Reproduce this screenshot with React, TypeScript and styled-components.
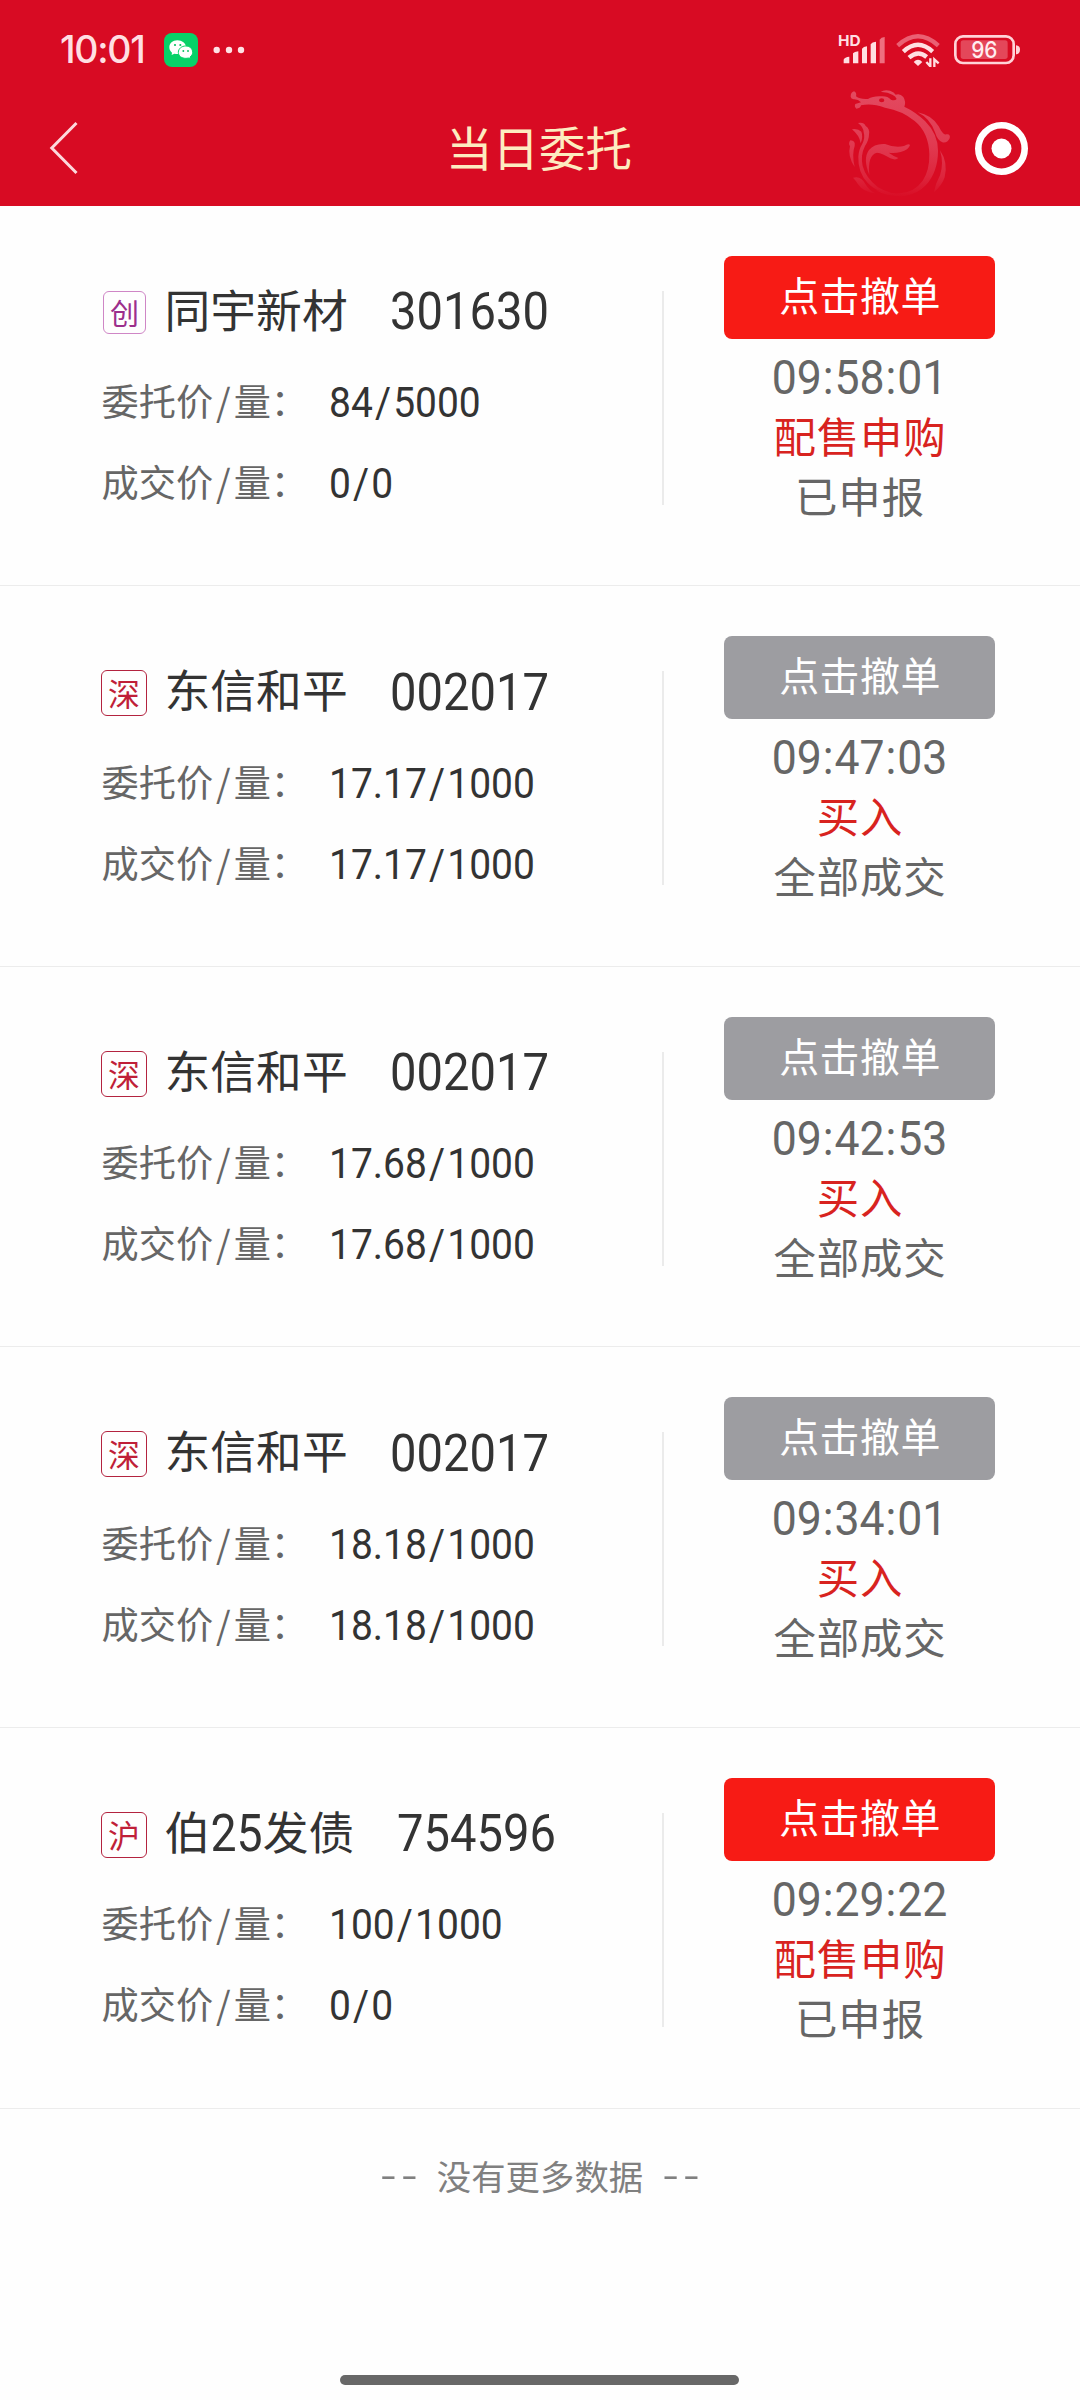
import React from "react";
import styled, { createGlobalStyle } from "styled-components";

const cjk = `"Noto Sans CJK SC", sans-serif`;
const latin = `Roboto, "Noto Sans CJK SC", sans-serif`;

const GlobalStyle = createGlobalStyle`
  * { box-sizing: border-box; }
  body { margin: 0; background: #fefefe; font-family: ${cjk}; }
`;

const Screen = styled.div`
  width: 1080px;
  height: 2400px;
  display: flex;
  flex-direction: column;
  overflow: hidden;
  background: #fefefe;
`;

const Header = styled.header`
  flex: none;
  height: 205.6px;
  background: #d80b23;
`;

const StatusBar = styled.div`
  height: 90px;
  padding: 10px 59px 0 60px;
  display: flex;
  align-items: center;
  justify-content: space-between;
`;

const StatusGroup = styled.div<{ $gap?: number }>`
  display: flex;
  align-items: center;
  gap: ${(p) => p.$gap ?? 0}px;
`;

const Clock = styled.span`
  width: 104px;
  font: 500 37.5px/40px Inter, sans-serif;
  letter-spacing: -1.3px;
  color: #ffdfe2;
`;

const NavBar = styled.div`
  position: relative;
  height: 115.6px;
  padding: 1px 52px 0 49px;
  display: flex;
  align-items: center;
  justify-content: space-between;
`;

const Title = styled.h1`
  margin: 0;
  font: 400 46.5px/60px ${cjk};
  color: #fdecc0;
  transform: translate(0.5px, -2px);
`;

const DragonMark = styled.svg`
  position: absolute;
  left: 845px;
  top: -4px;
  width: 110px;
  height: 116px;
`;

const Icon = styled.svg`
  display: block;
  flex: none;
`;

const MoreDots = styled(Icon)`
  margin-left: 14px;
`;

const Row = styled.article`
  flex: none;
  height: 380.6px;
  display: flex;
  border-bottom: 1.5px solid #ececec;
`;

const Details = styled.div`
  width: 664px;
  padding: 59px 0 0 101px;
`;

const Divider = styled.div`
  flex: none;
  width: 2px;
  height: 214px;
  margin: 85px 0 0 -2px;
  background: #ebebeb;
`;

const NameLine = styled.div`
  height: 92px;
  margin-bottom: 4px;
  display: flex;
  align-items: center;
`;

const Badge = styled.span<{ $purple?: boolean }>`
  flex: none;
  width: ${(p) => (p.$purple ? 43 : 46)}px;
  height: ${(p) => (p.$purple ? 43 : 46)}px;
  margin: ${(p) => (p.$purple ? "4px 19px 0 2px" : "4px 18px 0 0")};
  padding-bottom: 2px;
  border: 1px solid ${(p) => (p.$purple ? "#cf86c6" : "#b3233f")};
  border-radius: 6px;
  display: flex;
  align-items: center;
  justify-content: center;
  font-size: ${(p) => (p.$purple ? 29 : 32)}px;
  line-height: 40px;
  color: ${(p) => (p.$purple ? "#9c2f8c" : "#c01f38")};
`;

const Name = styled.span`
  margin-right: 42px;
  font-size: 45.8px;
  line-height: 60px;
  color: #333;
  white-space: nowrap;
  transform: translate(-0.5px, -3px);
`;

const Digits = styled.span<{ $size: number; $color?: string; $center?: boolean }>`
  display: inline-block;
  font-family: ${latin};
  font-size: ${(p) => p.$size}px;
  letter-spacing: 0;
  color: ${(p) => p.$color ?? "#333"};
  white-space: nowrap;
  transform: translateY(1px) scaleX(0.91);
  transform-origin: ${(p) => (p.$center ? "center" : "left")};
`;

const InlineDigits = styled(Digits)`
  margin-right: -5px;
  line-height: 50px;
`;

const Slash = styled.span<{ $gap: number }>`
  margin: 0 ${(p) => p.$gap}px;
`;

const PriceLine = styled.div`
  height: 81px;
  display: flex;
  align-items: center;
`;

const Label = styled.span`
  width: 228px;
  padding-left: 0.5px;
  font-size: 37.2px;
  line-height: 50px;
  color: #666;
  white-space: nowrap;
  transform: translateY(-1.5px);
`;

const Actions = styled.div`
  width: 391px;
  display: flex;
  flex-direction: column;
  align-items: center;
  padding-top: 50px;
`;

const CancelButton = styled.button<{ $active: boolean }>`
  width: 271px;
  height: 83px;
  margin-bottom: 8px;
  padding: 0 0 7px 1px;
  border: 0;
  border-radius: 8px;
  background: ${(p) => (p.$active ? "#f71b15" : "#9d9da1")};
  color: #fff;
  font: 400 40px/60px ${cjk};
  letter-spacing: 0.4px;
`;

const Info = styled.div<{ $color: string }>`
  height: 60px;
  display: flex;
  align-items: center;
  font-size: 42.4px;
  letter-spacing: 0.9px;
  line-height: 60px;
  color: ${(p) => p.$color};
  white-space: nowrap;
`;

const InfoText = styled.span`
  transform: translate(0.5px, -2.3px);
`;

const Footer = styled.footer`
  height: 136px;
  display: flex;
  justify-content: center;
  align-items: center;
  font-size: 34.4px;
  color: #808080;
`;

const FooterText = styled.span`
  margin: 0 20px;
  transform: translateY(-2px);
`;

const Dashes = styled.span`
  font: 300 52px/50px ${latin};
  letter-spacing: 6px;
  margin-right: -6px;
`;

const HomeBar = styled.div`
  width: 399px;
  height: 10px;
  margin: auto 341px 15.5px 340px;
  border-radius: 5px;
  background: #686868;
`;

type Order = {
  market: string;
  name: React.ReactNode;
  code: string;
  order: [string, string];
  filled: [string, string];
  active: boolean;
  time: string;
  type: string;
  status: string;
};

const orders: Order[] = [
  { market: "创", name: "同宇新材", code: "301630", order: ["84", "5000"], filled: ["0", "0"], active: true, time: "09:58:01", type: "配售申购", status: "已申报" },
  { market: "深", name: "东信和平", code: "002017", order: ["17.17", "1000"], filled: ["17.17", "1000"], active: false, time: "09:47:03", type: "买入", status: "全部成交" },
  { market: "深", name: "东信和平", code: "002017", order: ["17.68", "1000"], filled: ["17.68", "1000"], active: false, time: "09:42:53", type: "买入", status: "全部成交" },
  { market: "深", name: "东信和平", code: "002017", order: ["18.18", "1000"], filled: ["18.18", "1000"], active: false, time: "09:34:01", type: "买入", status: "全部成交" },
  { market: "沪", name: <>伯<InlineDigits $size={51}>25</InlineDigits>发债</>, code: "754596", order: ["100", "1000"], filled: ["0", "0"], active: true, time: "09:29:22", type: "配售申购", status: "已申报" },
];

function Price({ label, pair }: { label: string; pair: [string, string] }) {
  return (
    <PriceLine>
      <Label>{label}<Slash $gap={3}>/</Slash>量：</Label>
      <Digits $size={42.8}>{pair[0]}<Slash $gap={2.4}>/</Slash>{pair[1]}</Digits>
    </PriceLine>
  );
}

function OrderRow({ o }: { o: Order }) {
  const [h, m, s] = o.time.split(":");
  return (
    <Row>
      <Details>
        <NameLine>
          <Badge $purple={o.market === "创"}>{o.market}</Badge>
          <Name>{o.name}</Name>
          <Digits $size={51.8}>{o.code}</Digits>
        </NameLine>
        <Price label="委托价" pair={o.order} />
        <Price label="成交价" pair={o.filled} />
      </Details>
      <Divider />
      <Actions>
        <CancelButton $active={o.active}>点击撤单</CancelButton>
        <Info $color="#666">
          <Digits $size={49} $color="#666" $center>
            {h}<Slash $gap={1}>:</Slash>{m}<Slash $gap={1}>:</Slash>{s}
          </Digits>
        </Info>
        <Info $color="#d8231f"><InfoText>{o.type}</InfoText></Info>
        <Info $color="#666"><InfoText>{o.status}</InfoText></Info>
      </Actions>
    </Row>
  );
}

function WeChat() {
  return (
    <Icon width="34" height="34" viewBox="0 0 102 102">
      <rect width="102" height="102" rx="24" fill="#07d268" />
      <path d="M40 22C26 22 16 31 16 43c0 7 3 12 8 16l-1 7 8-4c3 1 6 1 10 1 14 0 25-8 25-20S54 22 40 22z" fill="#fff" />
      <path d="M65 39c-12 0-22 8-22 19s10 18 22 18c3 0 5 0 8-1l6 3-1-6c5-3 8-8 8-14 0-11-9-19-21-19z" fill="#fff" stroke="#07d268" strokeWidth="3" />
      <g fill="#07c160"><circle cx="33" cy="36" r="3.2" /><circle cx="49" cy="36" r="3.2" /><circle cx="58" cy="54" r="2.8" /><circle cx="72" cy="54" r="2.8" /></g>
    </Icon>
  );
}

function Signal() {
  return (
    <Icon width="52" height="34" viewBox="172 98 156 102">
      <text x="175" y="137" fontFamily="Inter" fontWeight="700" fontSize="44" textLength="68" lengthAdjust="spacingAndGlyphs" fill="#ffdfe2">HD</text>
      <g fill="#ffdfe2">
        <path d="M192 189v-11q3-8 17-9v20z" />
        <path d="M220 189v-30q4-5 16-6v36z" />
        <path d="M247 189v-44q4-6 15-7v51z" />
        <path d="M273 189v-57q4-7 16-8v65z" />
      </g>
      <path d="M300 189v-71q4-7 15-8v79z" fill="#ee6f7f" />
    </Icon>
  );
}

function Wifi() {
  return (
    <Icon width="46" height="34" viewBox="347 98 138 102">
      <g fill="none" strokeWidth="13">
        <path d="M355 136Q416 80 477 136" stroke="#ea6073" />
        <path d="M372 154Q416 113 460 154" stroke="#ffdfe2" />
        <path d="M389 172Q416 148 442 170" stroke="#ffdfe2" />
      </g>
      <path d="M403 185q13-13 26 0l-13 12z" fill="#ffdfe2" />
      <path d="M453 174v24l-12-13M465 201v-24l13 12" fill="none" stroke="#ffdfe2" strokeWidth="7" />
    </Icon>
  );
}

function Battery() {
  return (
    <Icon width="68" height="34" viewBox="519 98 204 102">
      <rect x="526" y="108" width="175" height="80" rx="23" fill="none" stroke="#ffd3d8" strokeWidth="8" />
      <rect x="542" y="120" width="141" height="56" rx="8" fill="#e4475a" />
      <path d="M708 135q12 1 12 13t-12 14z" fill="#ffd3d8" />
      <text x="613" y="174" textAnchor="middle" fontFamily="Inter" fontWeight="500" fontSize="70" textLength="79" lengthAdjust="spacingAndGlyphs" fill="#ffeef0">96</text>
    </Icon>
  );
}

function Dragon() {
  return (
    <DragonMark viewBox="195 258 330 348">
      <defs>
        <linearGradient id="fade" gradientUnits="userSpaceOnUse" x1="0" y1="270" x2="0" y2="595">
          <stop offset="0" stopColor="#e34a60" />
          <stop offset="0.5" stopColor="#e13a51" />
          <stop offset="0.8" stopColor="#dd253c" />
          <stop offset="1" stopColor="#d80b23" />
        </linearGradient>
      </defs>
      <g fill="url(#fade)">
        <path fillRule="evenodd" d="M212 290Q212 277 222 274Q231 278 228 289Q240 299 264 297Q279 288 302 289Q322 287 333 299Q344 304 350 297Q347 288 337 284Q322 275 302 276Q312 268 330 272Q343 276 347 284Q360 279 370 291Q379 306 373 320Q407 336 435 363Q474 402 474 452Q474 515 438 555Q414 581 375 588Q325 592 286 570Q322 582 360 580Q404 576 428 542Q449 511 448 462Q446 397 404 363Q367 332 315 323Q274 308 243 316Q241 326 229 326Q222 320 226 312L243 307Q234 297 221 298Q213 297 212 290ZM297 301a8 6 0 1 0 16 0a8 6 0 1 0-16 0Z" />
        <path d="M413 337Q455 345 476 379Q490 408 499 403L502 403Q512 404 509 415Q502 430 487 427Q472 421 465 397Q450 355 413 337Z" />
        <path d="M234 369Q251 365 257 378Q270 386 267 403Q267 421 255 438Q241 465 248 498Q257 533 294 562Q330 583 372 585Q301 588 264 550Q233 518 235 470Q236 449 247 431Q256 414 251 397Q250 380 234 369Z" />
        <path d="M216 388Q234 385 244 395Q250 410 242 430Q239 407 216 388Z" />
        <path d="M211 421Q227 422 224 438Q215 463 224 501Q202 469 210 439Q204 431 211 421Z" />
        <path d="M268 525Q248 476 267 450Q283 430 315 432Q347 445 372 438Q386 430 390 435Q386 450 362 456Q343 461 326 458Q338 467 355 474Q348 482 331 475Q308 460 291 458Q262 465 268 525Z" />
        <path d="M480 451Q505 488 494 532Q486 557 462 576Q466 552 480 526Q492 490 480 451Z" />
        <path d="M219 533Q243 526 256 552Q269 573 286 580Q249 576 234 553Q230 544 219 533Z" />
      </g>
    </DragonMark>
  );
}

export default function App() {
  return (
    <Screen>
      <GlobalStyle />
      <Header>
        <StatusBar>
          <StatusGroup>
            <Clock>10:01</Clock>
            <WeChat />
            <MoreDots width="34" height="10" viewBox="0 0 34 10">
              <g fill="#ffe3e5"><circle cx="4.7" cy="5" r="3.2" /><circle cx="17" cy="5" r="3.2" /><circle cx="29" cy="5" r="3.2" /></g>
            </MoreDots>
          </StatusGroup>
          <StatusGroup $gap={12}>
            <StatusGroup $gap={6}>
              <Signal />
              <Wifi />
            </StatusGroup>
            <Battery />
          </StatusGroup>
        </StatusBar>
        <NavBar>
          <Icon width="53" height="54" viewBox="0 0 53 54">
            <path d="M27.5 2L2.8 27L27.5 52" fill="none" stroke="#fdd9dc" strokeWidth="3" />
          </Icon>
          <Title>当日委托</Title>
          <Dragon />
          <Icon width="53" height="53" viewBox="0 0 53 53">
            <circle cx="26.5" cy="26.5" r="23.2" fill="none" stroke="#fff" strokeWidth="6.6" />
            <circle cx="26.5" cy="26.5" r="10" fill="#fff" />
          </Icon>
        </NavBar>
      </Header>
      <main>
        {orders.map((o) => <OrderRow key={o.time} o={o} />)}
      </main>
      <Footer>
        <Dashes>--</Dashes>
        <FooterText>没有更多数据</FooterText>
        <Dashes>--</Dashes>
      </Footer>
      <HomeBar />
    </Screen>
  );
}
